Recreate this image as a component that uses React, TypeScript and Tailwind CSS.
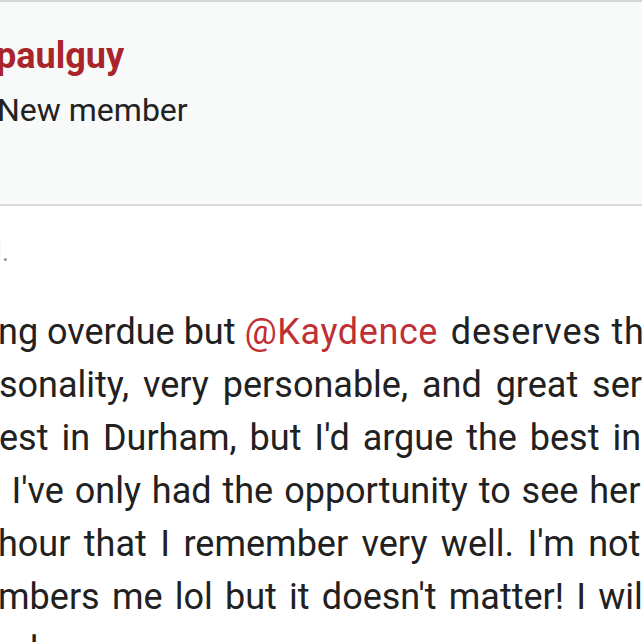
import React from 'react';

const lines: { ml: number; ws: string; parts: { text: string; mention?: boolean }[] }[] = [
  { ml: -2, ws: '0px', parts: [{ text: 'ng overdue but ' }, { text: '@Kaydence', mention: true }, { text: ' deserves the recognition' }] },
  { ml: -1, ws: '5px', parts: [{ text: 'sonality, very personable, and great service' }] },
  { ml: -1, ws: '4px', parts: [{ text: 'est in Durham, but I\'d argue the best in the' }] },
  { ml: -9, ws: '2px', parts: [{ text: '. I\'ve only had the opportunity to see her' }] },
  { ml: -2, ws: '4.5px', parts: [{ text: 'hour that I remember very well. I\'m not sure' }] },
  { ml: -2, ws: '3.3px', parts: [{ text: 'mbers me lol but it doesn\'t matter! I will' }] },
  { ml: -2, ws: '0px', parts: [{ text: 'nd see you soon.' }] },
];

export default function App() {
  return (
    <div className="w-[642px] h-[642px] overflow-hidden bg-white font-['Roboto',sans-serif] text-[#212121]">
      <div className="h-[206px] bg-[#f8f9f9] border-t-2 border-b-2 border-t-[#d6d7d7] border-b-[#d9dada] pt-[34px]">
        <div className="ml-[-4px] text-[36px] leading-[40px] font-bold text-[#a9242b] whitespace-nowrap">paulguy</div>
        <div className="ml-[-3px] mt-[14px] text-[32px] leading-[40px] text-[#222] whitespace-nowrap">New member</div>
      </div>

      <div className="mt-[30px] ml-[-5px] text-[28px] leading-[32px] text-[#9a9a9a] whitespace-nowrap">l.</div>

      <div className="mt-[38px] text-[36px] leading-[53px]">
        {lines.map((line, i) => (
          <div key={i} className="whitespace-nowrap" style={{ marginLeft: line.ml, wordSpacing: line.ws }}>
            {line.parts.map((p, j) => (
              <span
                key={j}
                className={
                  p.mention
                    ? 'text-[#bf3035] tracking-[0.6px] mr-[3px]'
                    : i === 0 && j === 2
                    ? 'tracking-[0.8px]'
                    : ''
                }
              >
                {p.text}
              </span>
            ))}
          </div>
        ))}
      </div>
    </div>
  );
}
